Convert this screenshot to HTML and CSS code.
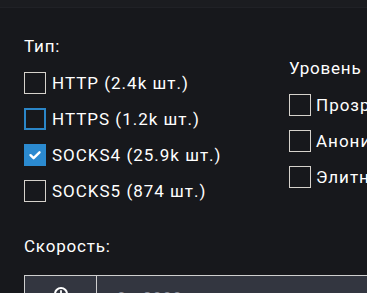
FILE: index.html
```html
<!DOCTYPE html>
<html>
<head>
<meta charset="utf-8">
<link rel="stylesheet" href="styles.css">
</head>
<body>
<div class="topbar"></div>
<main class="panel">
  <div class="filters">
    <section class="group">
      <h3 class="group-title">Тип:</h3>
      <label class="check"><span class="box"></span><span class="label">HTTP (2.4k шт.)</span></label>
      <label class="check"><span class="box focus"></span><span class="label">HTTPS (1.2k шт.)</span></label>
      <label class="check"><span class="box checked"><svg viewBox="0 0 22 22" width="22" height="22"><path d="M6.5 11.2 L9.6 14.2 L15.5 8.3" fill="none" stroke="#fff" stroke-width="2.4" stroke-linecap="round" stroke-linejoin="round"/></svg></span><span class="label">SOCKS4 (25.9k шт.)</span></label>
      <label class="check"><span class="box"></span><span class="label">SOCKS5 (874 шт.)</span></label>
    </section>
    <section class="group level">
      <h3 class="group-title">Уровень анонимности:</h3>
      <label class="check"><span class="box"></span><span class="label">Прозрачный</span></label>
      <label class="check"><span class="box"></span><span class="label">Анонимный</span></label>
      <label class="check"><span class="box"></span><span class="label">Элитный</span></label>
    </section>
  </div>
  <section class="speed">
    <h3 class="group-title speed-title">Скорость:</h3>
    <div class="input">
      <span class="addon"><svg viewBox="0 0 16 16" width="16" height="16"><circle cx="8" cy="8" r="6" fill="none" stroke="#fff" stroke-width="2"/><path d="M8 5 V8.5 L10 10" fill="none" stroke="#fff" stroke-width="1.8" stroke-linecap="round"/></svg></span>
      <span class="field">0...8000 мс</span>
    </div>
  </section>
</main>
</body>
</html>
```
FILE: styles.css
```css
html, body {
  margin: 0;
  padding: 0;
  background: #17181c;
  overflow: hidden;
}
body {
  width: 367px;
  height: 293px;
  color: #ffffff;
  font-family: Roboto, "Liberation Sans", sans-serif;
}
.topbar {
  height: 7px;
  background: #1b1c20;
  border-bottom: 1px solid #202126;
}
.panel {
  padding: 0 0 0 24px;
}
.filters {
  display: grid;
  grid-template-columns: 265px 1fr;
  white-space: nowrap;
}
.group {
  display: flex;
  flex-direction: column;
  gap: 14px;
  padding-top: 28px;
}
.group-title {
  margin: 0 0 2px 0;
  font-weight: 400;
  font-size: 17px;
  line-height: 20px;
  letter-spacing: 0.8px;
}
.level {
  padding-top: 50px;
}
.check {
  display: flex;
  align-items: center;
  gap: 6px;
  height: 22px;
  font-size: 17px;
  letter-spacing: 1px;
}
.level .check {
  gap: 5px;
}
.box {
  box-sizing: border-box;
  width: 22px;
  height: 22px;
  flex: none;
  border: 1px solid #d6d2cc;
  display: flex;
}
.box.focus {
  border: 2px solid #2b86c8;
}
.box.checked {
  border: none;
  background: #2b8ad0;
}
.speed {
  padding-top: 34px;
}
.speed-title {
  margin-bottom: 19px;
}
.input {
  display: flex;
  height: 44px;
  border: 1px solid #cfcfcf;
  border-right: none;
  background: #333640;
}
.addon {
  width: 72px;
  border-right: 1px solid #cfcfcf;
  display: flex;
  justify-content: center;
  padding-top: 10px;
  box-sizing: border-box;
}
.field {
  padding: 13px 0 0 20px;
  font-size: 16px;
  color: #8d909a;
  letter-spacing: 1px;
}
```
